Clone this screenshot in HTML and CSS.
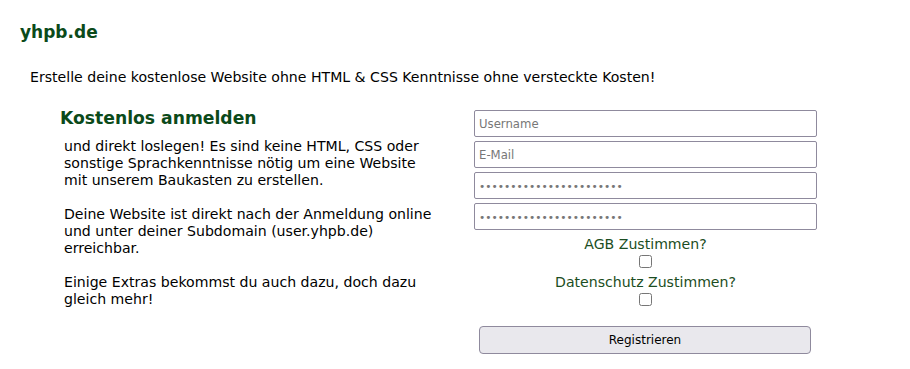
FILE: index.html
```html
<!DOCTYPE html>
<html lang="de">
<head>
  <meta charset="UTF-8">
  <title>yhpb.de - Kostenlos anmelden</title>
  <link rel="stylesheet" href="styles.css">
</head>
<body>
  <header class="site-header">
    <h1 class="logo">yhpb.de</h1>
  </header>

  <p class="intro">Erstelle deine kostenlose Website ohne HTML &amp; CSS Kenntnisse ohne versteckte Kosten!</p>

  <div class="signup">
    <div class="signup-info">
      <h2>Kostenlos anmelden</h2>
      <p>und direkt loslegen! Es sind keine HTML, CSS oder sonstige Sprachkenntnisse nötig um eine Website mit unserem Baukasten zu erstellen.</p>
      <p>Deine Website ist direkt nach der Anmeldung online und unter deiner Subdomain (user.yhpb.de) erreichbar.</p>
      <p>Einige Extras bekommst du auch dazu, doch dazu gleich mehr!</p>
    </div>

    <form class="signup-form" onsubmit="return false;">
      <input type="text" name="username" placeholder="Username">
      <input type="text" name="email" placeholder="E-Mail">
      <input type="password" name="password" value="passwortpasswortpasswor">
      <input type="password" name="password2" value="passwortpasswortpasswor">
      <label class="agree agree-first" for="agb">AGB Zustimmen?</label>
      <input type="checkbox" id="agb" class="check">
      <label class="agree" for="privacy">Datenschutz Zustimmen?</label>
      <input type="checkbox" id="privacy" class="check">
      <button type="submit">Registrieren</button>
    </form>
  </div>
</body>
</html>
```

FILE: styles.css
```css
body {
  margin: 8px;
  font-family: 'DejaVu Sans', Verdana, sans-serif;
  font-size: 14.1px;
  color: #000;
  background: #fff;
}

.site-header {
  padding: 14px 12px 0;
}

.logo {
  margin: 0;
  font-size: 17px;
  color: #0b4a1a;
}

.intro {
  margin: 27px 0 0 22px;
  line-height: 17px;
}

.signup {
  display: flex;
  margin-top: 24px;
}

.signup-info {
  width: 376px;
  margin-left: 52px;
}

.signup-info h2 {
  margin: -2px 0 10px;
  font-size: 17.2px;
  color: #0b4a1a;
}

.signup-info p {
  margin: 0 0 17px 4px;
  line-height: 17px;
}

.signup-form {
  display: flex;
  flex-direction: column;
  align-items: center;
  width: 343px;
  margin-left: 38px;
}

.signup-form input[type="text"],
.signup-form input[type="password"] {
  box-sizing: border-box;
  width: 343px;
  height: 27px;
  margin: 0 0 4px;
  padding: 0 4px;
  border: 1px solid #8f8a9d;
  border-radius: 2px;
  font-family: 'DejaVu Sans', Verdana, sans-serif;
  font-size: 11.7px;
  color: #777;
}

.signup-form input[type="password"] {
  font-size: 10.6px;
}

.signup-form input::placeholder {
  color: #777;
}

.agree {
  line-height: 17px;
  color: #1b4d22;
}

.agree-first {
  margin-top: 2px;
}

.check {
  width: 13px;
  height: 13px;
  margin: 2px 0 6px;
}

button {
  width: 332px;
  height: 28px;
  margin-top: 14px;
  margin-right: 1px;
  border: 1px solid #8f8a9d;
  border-radius: 4px;
  background: #e9e8ed;
  font-family: 'DejaVu Sans', Verdana, sans-serif;
  font-size: 12px;
  color: #000;
}
```
